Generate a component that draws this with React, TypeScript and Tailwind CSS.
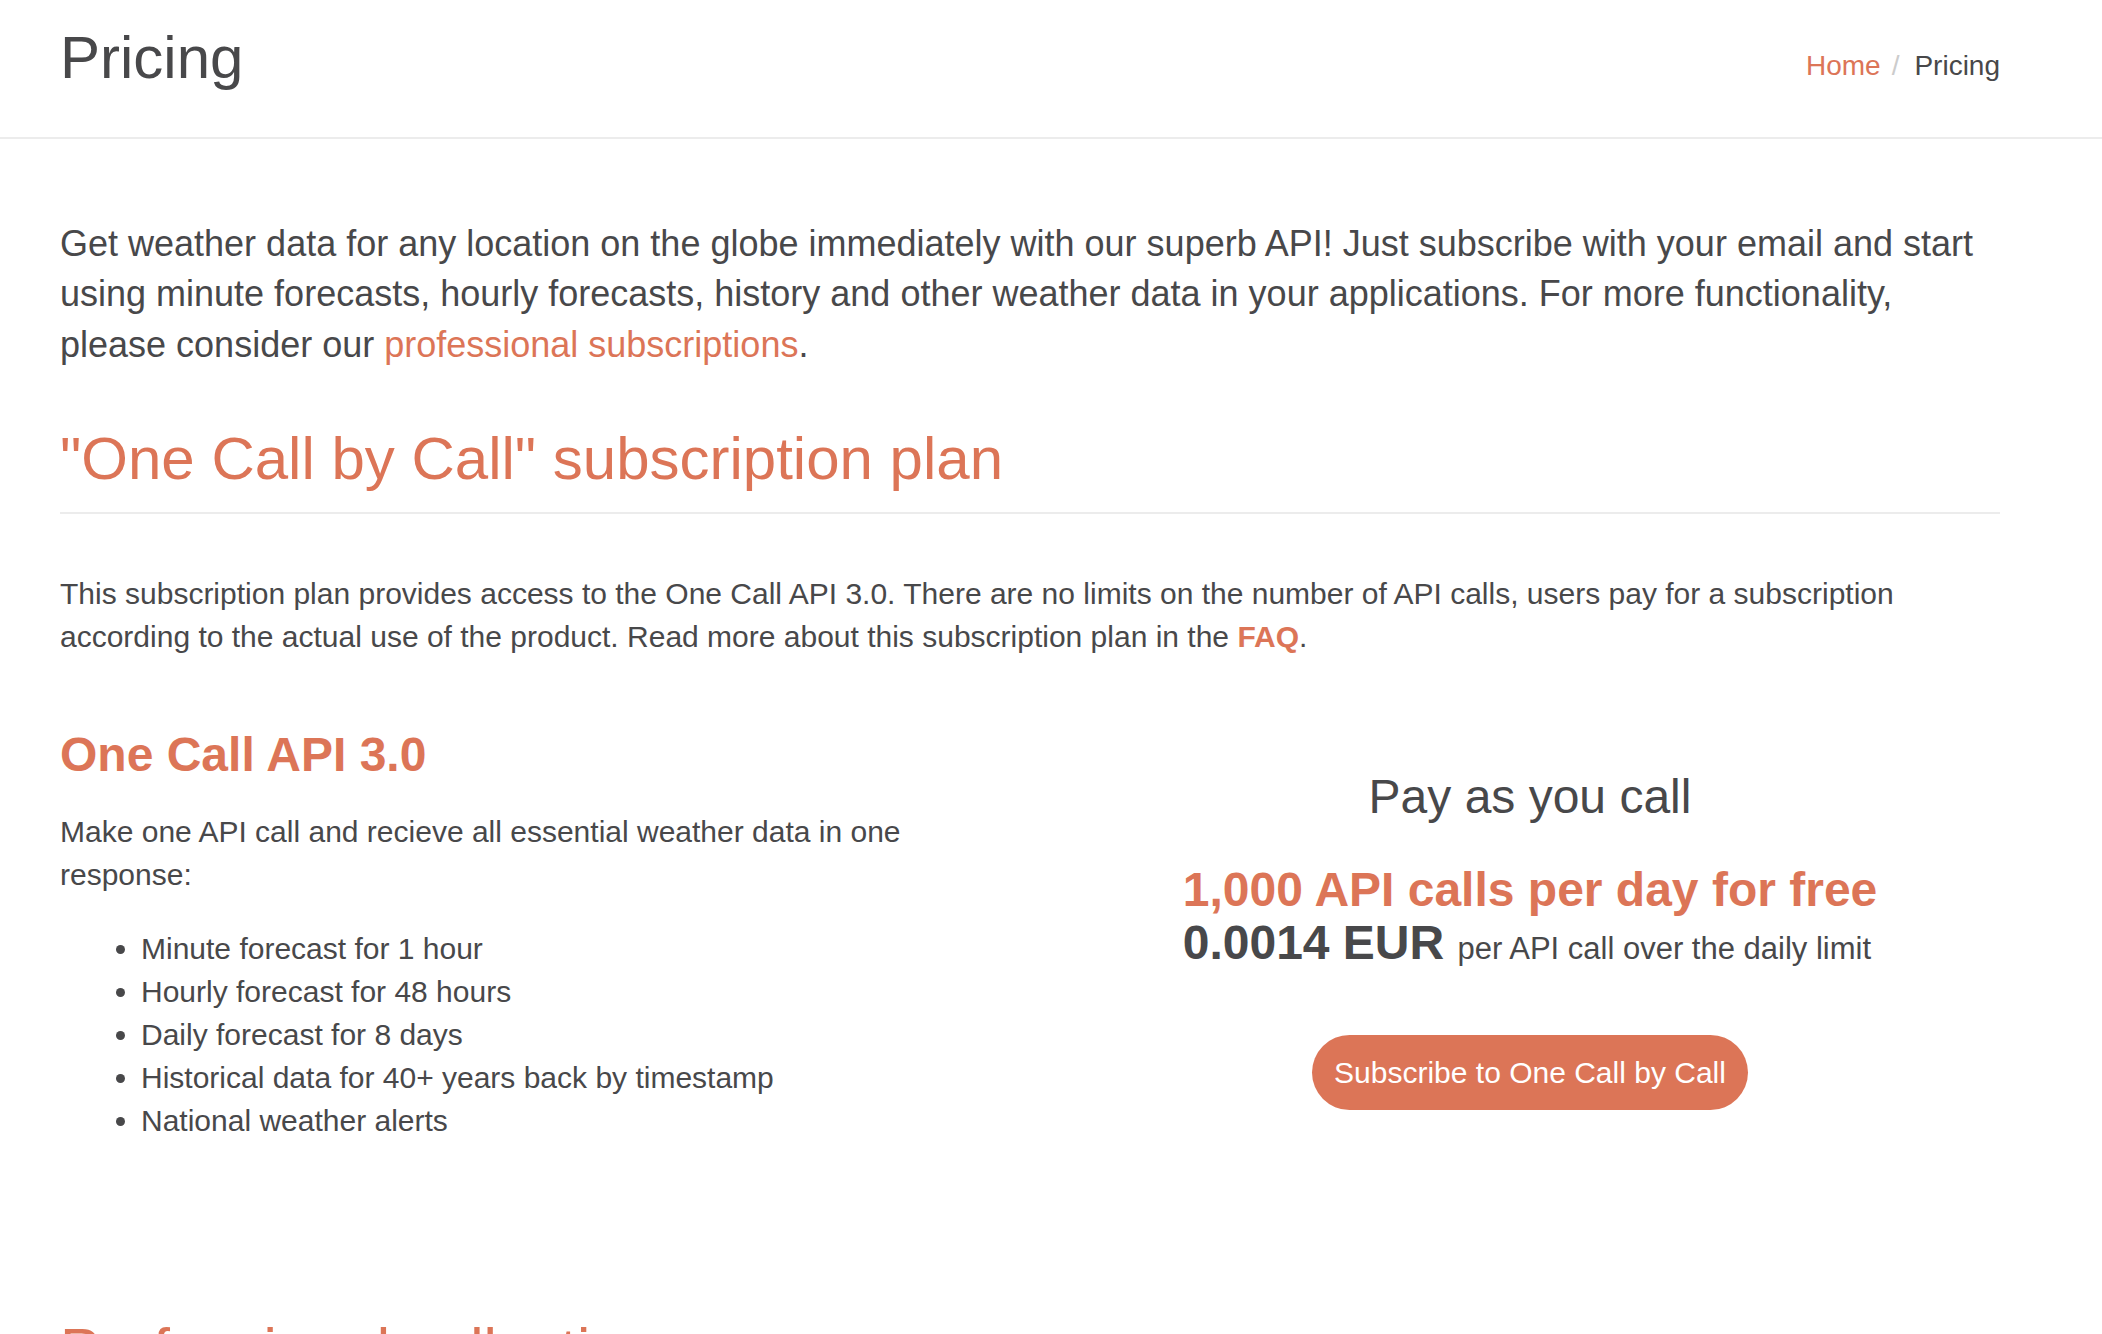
const features = [
  "Minute forecast for 1 hour",
  "Hourly forecast for 48 hours",
  "Daily forecast for 8 days",
  "Historical data for 40+ years back by timestamp",
  "National weather alerts",
]

export default function App() {
  return (
    <main className="min-h-screen bg-white text-[#48484a] font-['Liberation_Sans',Arial,sans-serif]">
      {/* Page header */}
      <header className="h-[139px] border-b-2 border-[#ececec]">
        <div className="ml-[60px] w-[1940px] flex items-start justify-between">
          <h1 className="mt-[25px] text-[60px] leading-[66px] font-normal">Pricing</h1>
          <ol className="mt-[46px] flex items-center text-[28px] leading-[40px]">
            <li>
              <a href="#" className="text-[#dc7557]">Home</a>
            </li>
            <li className="ml-[11px] mr-[15px] text-[#cccccc]">/</li>
            <li>Pricing</li>
          </ol>
        </div>
      </header>

      <section className="ml-[60px] w-[1940px]">
        <p className="mt-[80px] text-[36px] leading-[50.4px]">
          Get weather data for any location on the globe immediately with our superb API! Just subscribe with your email and start
          using minute forecasts, hourly forecasts, history and other weather data in your applications. For more functionality,
          please consider our <a href="#" className="text-[#dc7557]">professional subscriptions</a>.
        </p>

        {/* One Call by Call */}
        <div className="mt-[56px] pb-[20px] border-b-2 border-[#ececec]">
          <h2 className="text-[60px] leading-[66px] text-[#dc7557]">"One Call by Call" subscription plan</h2>
        </div>

        <p className="mt-[59px] text-[30px] leading-[42.86px]">
          This subscription plan provides access to the One Call API 3.0. There are no limits on the number of API calls, users pay for a subscription
          according to the actual use of the product. Read more about this subscription plan in the{" "}
          <a href="#" className="font-bold text-[#dc7557]">FAQ</a>.
        </p>

        <div className="mt-[70px] grid grid-cols-2 gap-x-[60px]">
          <div>
            <h3 className="text-[48px] leading-[52.8px] font-bold text-[#dc7557]">One Call API 3.0</h3>
            <p className="mt-[29px] text-[30px] leading-[42.86px]">
              Make one API call and recieve all essential weather data in one response:
            </p>
            <ul className="mt-[32px] list-disc pl-[81px] text-[30px] leading-[42.86px]">
              {features.map((f) => (
                <li key={f}>{f}</li>
              ))}
            </ul>
          </div>

          <div className="flex flex-col items-center">
            <h3 className="mt-[42px] text-[48px] leading-[52.8px]">Pay as you call</h3>
            <div className="mt-[40px] text-[48px] leading-[52.8px] font-bold">
              <div className="text-[#dc7557]">1,000 API calls per day for free</div>
              <div>
                0.0014 EUR <span className="text-[31px] font-normal">per API call over the daily limit</span>
              </div>
            </div>
            <button className="mt-[60px] h-[75px] px-[22px] rounded-full bg-[#dc7557] text-white text-[30px]">
              Subscribe to One Call by Call
            </button>
          </div>
        </div>

        <h2 className="mt-[174px] text-[60px] leading-[66px] text-[#dc7557]">Professional collections</h2>
      </section>
    </main>
  )
}
